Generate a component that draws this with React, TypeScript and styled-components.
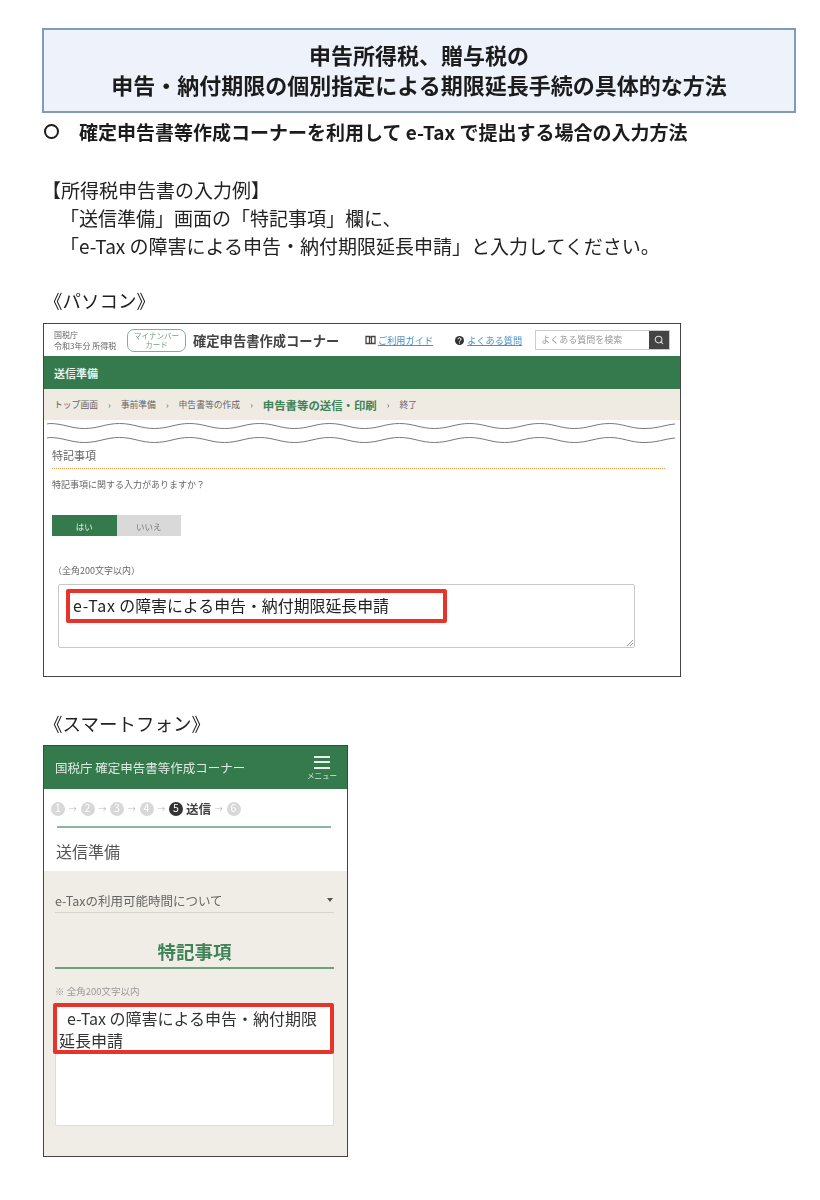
import { Fragment } from "react";
import styled, { createGlobalStyle } from "styled-components";
import { Search } from "lucide-react";

const GlobalStyle = createGlobalStyle`
  html, body {
    margin: 0;
    background: #fff;
  }
  body {
    font-family: "Noto Sans CJK JP", "Noto Sans", sans-serif;
    color: #222;
  }
`;

const Page = styled.div`
  width: 820px;
  height: 1200px;
  box-sizing: border-box;
  padding: 28px 24px 0 42px;
  overflow: hidden;
  filter: blur(0.35px);
`;

const TitleBox = styled.div`
  width: 754px;
  height: 85px;
  box-sizing: border-box;
  border: 2px solid #7f9bb8;
  padding-bottom: 4px;
  background: #eef3fb;
  display: flex;
  flex-direction: column;
  align-items: center;
  justify-content: center;
  font-size: 22px;
  font-weight: 700;
  line-height: 30px;
  color: #1c1c1c;
`;

const Heading = styled.div`
  display: flex;
  align-items: center;
  gap: 20px;
  height: 28px;
  margin-top: 4px;
  padding-left: 2px;
  font-size: 19px;
  font-weight: 700;
  color: #1c1c1c;
`;

const Ring = styled.span`
  width: 11px;
  height: 11px;
  border: 2.5px solid #1c1c1c;
  border-radius: 50%;
`;

const Body = styled.div`
  margin-top: 31px;
  font-size: 19px;
  line-height: 28px;
`;

const Indented = styled.div`
  padding-left: 18px;
`;

const Caption = styled.div<{ $top: number }>`
  margin-top: ${(p) => p.$top}px;
  padding-left: 2px;
  font-size: 18.5px;
  line-height: 28px;
`;

const DesktopFrame = styled.div`
  width: 638px;
  height: 354px;
  margin: 9px 0 0 1px;
  box-sizing: border-box;
  border: 1.5px solid #444;
  display: flex;
  flex-direction: column;
  background: #fff;
`;

const TopBar = styled.div`
  height: 32px;
  flex: none;
  display: flex;
  align-items: center;
  padding: 0 10px;
  color: #555;
`;

const Agency = styled.div`
  width: 73px;
  flex: none;
  font-size: 8px;
  line-height: 11px;
  color: #666;
  white-space: nowrap;
`;

const CardBadge = styled.div`
  width: 59px;
  height: 23px;
  flex: none;
  box-sizing: border-box;
  border: 1px solid #7fae93;
  border-radius: 7px;
  display: flex;
  align-items: center;
  justify-content: center;
  text-align: center;
  font-size: 7.5px;
  line-height: 9px;
  color: #6f9f84;
`;

const AppTitle = styled.div`
  margin-left: 7px;
  width: 172px;
  flex: none;
  font-size: 13.3px;
  font-weight: 700;
  color: #444;
  white-space: nowrap;
`;

const GuideLink = styled.a`
  display: flex;
  align-items: center;
  gap: 2px;
  margin-right: 21px;
  flex: none;
  font-size: 9.2px;
  color: #4a90c8;
  text-decoration: underline;
  white-space: nowrap;
`;

const SearchBox = styled.div`
  margin-left: -8px;
  width: 135px;
  height: 20px;
  flex: none;
  display: flex;
  box-sizing: border-box;
  border: 1px solid #ccc;
`;

const SearchText = styled.div`
  flex: 1;
  padding-left: 5px;
  font-size: 9px;
  line-height: 18px;
  color: #999;
`;

const SearchButton = styled.div`
  width: 20px;
  background: #444;
  color: #ddd;
  display: flex;
  align-items: center;
  justify-content: center;
`;

const GreenBand = styled.div`
  height: 33px;
  flex: none;
  background: #357a4c;
  color: #e8f0ea;
  display: flex;
  align-items: center;
  padding-left: 10px;
  font-size: 11px;
  font-weight: 700;
`;

const Crumbs = styled.div`
  height: 31px;
  flex: none;
  background: #efebe3;
  display: flex;
  align-items: center;
  gap: 10px;
  padding-left: 10px;
  font-size: 8.8px;
  color: #666;
`;

const CrumbNow = styled.span`
  font-size: 11.4px;
  font-weight: 700;
  color: #3f8458;
`;

const WaveCut = styled.svg`
  display: block;
  flex: none;
  width: 100%;
  height: 25px;
`;

const Form = styled.div`
  flex: 1;
  padding: 0 8px 0 8px;
  display: flex;
  flex-direction: column;
`;

const FieldTitle = styled.div`
  height: 20px;
  padding-bottom: 3px;
  border-bottom: 1px dotted #e8a04c;
  margin-right: 7px;
  font-size: 11px;
  line-height: 20px;
  color: #666;
`;

const Question = styled.div`
  margin-top: 9px;
  font-size: 9px;
  line-height: 14px;
  color: #666;
`;

const Toggle = styled.div`
  display: flex;
  margin-top: 23px;
`;

const ToggleButton = styled.div<{ $on?: boolean }>`
  width: 64.5px;
  height: 21px;
  display: flex;
  align-items: center;
  justify-content: center;
  font-size: 8.5px;
  background: ${(p) => (p.$on ? "#357a4c" : "#d9d9d9")};
  color: ${(p) => (p.$on ? "#e8f0ea" : "#777")};
`;

const LimitNote = styled.div`
  margin: 29px 0 0 1px;
  font-size: 9px;
  line-height: 12px;
  color: #666;
`;

const TextArea = styled.div`
  position: relative;
  width: 577px;
  height: 64px;
  margin: 7px 0 0 6px;
  box-sizing: border-box;
  border: 1px solid #c8c8c8;
  border-radius: 2px;
  padding: 4px 0 0 7px;
`;

const Highlight = styled.div`
  width: 381px;
  height: 34px;
  box-sizing: border-box;
  border: 4px solid #e8332a;
  border-radius: 2px;
  padding-left: 3px;
  font-size: 15.9px;
  line-height: 26px;
  color: #222;
  white-space: pre;
`;

const LatinWord = styled.span`
  letter-spacing: 0.8px;
`;

const ResizeGrip = styled.svg`
  position: absolute;
  right: 1px;
  bottom: 1px;
  width: 7px;
  height: 7px;
`;

const PhoneFrame = styled.div`
  width: 305px;
  height: 412px;
  margin: 8px 0 0 1px;
  box-sizing: border-box;
  border: 1.5px solid #444;
  display: flex;
  flex-direction: column;
  background: #f0ede6;
`;

const PhoneHeader = styled.div`
  height: 43px;
  flex: none;
  background: #357a4c;
  color: #dfe9e2;
  display: flex;
  align-items: center;
  justify-content: space-between;
  padding: 0 10px 0 11px;
  font-size: 12.5px;
`;

const MenuButton = styled.div`
  display: flex;
  flex-direction: column;
  align-items: center;
  gap: 2px;
  font-size: 7.5px;
  line-height: 9px;
`;

const MenuBars = styled.div`
  width: 16px;
  height: 13px;
  border-top: 2px solid #e6eee8;
  border-bottom: 2px solid #e6eee8;
  box-sizing: border-box;
  display: flex;
  align-items: center;

  &::before {
    content: "";
    display: block;
    width: 100%;
    height: 2px;
    background: #e6eee8;
  }
`;

const PhoneTop = styled.div`
  height: 82px;
  flex: none;
  background: #fff;
  padding: 0 16px 0 13px;
  color: #555;
`;

const Steps = styled.div`
  height: 37px;
  box-sizing: border-box;
  padding-top: 2px;
  margin-left: -6px;
  display: flex;
  align-items: center;
  gap: 3px;
  font-size: 8px;
  color: #c4c4c4;
`;

const StepDot = styled.span<{ $on?: boolean }>`
  width: 14px;
  height: 14px;
  border-radius: 50%;
  display: flex;
  align-items: center;
  justify-content: center;
  font-size: 10.5px;
  line-height: 1;
  background: ${(p) => (p.$on ? "#333" : "#d8d8d8")};
  color: #fff;
`;

const StepArrow = styled.span`
  width: 9.5px;
  text-align: center;
  font-size: 8px;
  color: #bbb;
`;

const StepLabel = styled.span`
  font-size: 12.5px;
  font-weight: 700;
  color: #444;
`;

const StepRule = styled.div`
  height: 1.5px;
  background: #8db79d;
`;

const PhoneTitle = styled.div`
  font-size: 16px;
  line-height: 46px;
  margin-left: -1px;
`;

const PhoneForm = styled.div`
  flex: 1;
  padding: 17px 13px 0 11px;
  display: flex;
  flex-direction: column;
`;

const Accordion = styled.div`
  height: 24px;
  display: flex;
  align-items: center;
  justify-content: space-between;
  border-bottom: 1px solid #d8d4ca;
  font-size: 12.5px;
  color: #666;
`;

const Caret = styled.span`
  width: 0;
  height: 0;
  margin-right: 1px;
  border-left: 3.5px solid transparent;
  border-right: 3.5px solid transparent;
  border-top: 4px solid #555;
`;

const GreenHeading = styled.div`
  margin-top: 21px;
  height: 33px;
  border-bottom: 2px solid #6aa37e;
  text-align: center;
  font-size: 18.5px;
  font-weight: 700;
  line-height: 34px;
  color: #3f8458;
`;

const PhoneNote = styled.div`
  margin-top: 15px;
  font-size: 9.5px;
  line-height: 14px;
  color: #999;
`;

const PhoneArea = styled.div`
  margin-top: 5px;
  height: 123px;
  box-sizing: border-box;
  border: 1px solid #e0ddd5;
  border-radius: 2px;
  background: #fff;
`;

const PhoneHighlight = styled.div`
  margin: -1px -1px 0 -3px;
  height: 51px;
  box-sizing: border-box;
  border: 4px solid #e8332a;
  border-radius: 2px;
  background: #fff;
  padding-left: 2px;
  font-size: 16px;
  line-height: 22px;
  color: #333;
`;

const FirstLine = styled.div`
  padding-left: 8px;
  white-space: nowrap;
`;

// cut marks across the desktop shot: period 70, crests at x = 120 + 70k on the page
const waveLine = (() => {
  let d = "M3 -2 L 5.5 -2.5";
  for (let x = 5.5; x < 500; x += 70) {
    d += ` C ${x + 14} -2.5, ${x + 21} 2.5, ${x + 35} 2.5 S ${x + 56} -2.5, ${x + 70} -2.5`;
  }
  return d + " C 579 -2.5, 586 2.5, 600 2.5 S 620 -1, 631 -2";
})();

const steps = [1, 2, 3, 4];

const App = () => {
  return (
    <Page>
      <GlobalStyle />
      <TitleBox>
        <div>申告所得税、贈与税の</div>
        <div>申告・納付期限の個別指定による期限延長手続の具体的な方法</div>
      </TitleBox>
      <Heading>
        <Ring />
        <span>確定申告書等作成コーナーを利用して e-Tax で提出する場合の入力方法</span>
      </Heading>
      <Body>
        <div>【所得税申告書の入力例】</div>
        <Indented>「送信準備」画面の「特記事項」欄に、</Indented>
        <Indented>「e-Tax の障害による申告・納付期限延長申請」と入力してください。</Indented>
      </Body>
      <Caption $top={26}>《パソコン》</Caption>
      <DesktopFrame>
        <TopBar>
          <Agency>
            <div>国税庁</div>
            <div>令和3年分 所得税</div>
          </Agency>
          <CardBadge>
            <div>
              マイナンバー
              <br />
              カード
            </div>
          </CardBadge>
          <AppTitle>確定申告書作成コーナー</AppTitle>
          <GuideLink>
            <svg width="11" height="10" viewBox="0 0 11 10">
              <path d="M1 1.5h3.5v7H1zM6.5 1.5H10v7H6.5zM4.5 2h2M1 8.5h9" fill="none" stroke="#444" strokeWidth="1.3" />
            </svg>
            ご利用ガイド
          </GuideLink>
          <GuideLink>
            <svg width="11" height="11" viewBox="0 0 11 11">
              <circle cx="5.5" cy="5.5" r="4.5" fill="#333" />
              <path d="M4 4.3a1.5 1.5 0 1 1 2 1.4c-.4.2-.5.4-.5.9M5.5 7.6v1" fill="none" stroke="#fff" strokeWidth="1" />
            </svg>
            よくある質問
          </GuideLink>
          <SearchBox>
            <SearchText>よくある質問を検索</SearchText>
            <SearchButton>
              <Search size={10} strokeWidth={2.5} />
            </SearchButton>
          </SearchBox>
        </TopBar>
        <GreenBand>送信準備</GreenBand>
        <Crumbs>
          <span>トップ画面</span>
          <span>›</span>
          <span>事前準備</span>
          <span>›</span>
          <span>申告書等の作成</span>
          <span>›</span>
          <CrumbNow>申告書等の送信・印刷</CrumbNow>
          <span>›</span>
          <span>終了</span>
        </Crumbs>
        <WaveCut viewBox="0 0 636 25">
          <path d={waveLine} transform="translate(0 6)" fill="none" stroke="#777" strokeWidth="1" />
          <path d={waveLine} transform="translate(0 20)" fill="none" stroke="#777" strokeWidth="1" />
        </WaveCut>
        <Form>
          <FieldTitle>特記事項</FieldTitle>
          <Question>特記事項に関する入力がありますか？</Question>
          <Toggle>
            <ToggleButton $on>はい</ToggleButton>
            <ToggleButton>いいえ</ToggleButton>
          </Toggle>
          <LimitNote>（全角200文字以内）</LimitNote>
          <TextArea>
            <Highlight>
              <LatinWord>e-Tax</LatinWord> の障害による申告・納付期限延長申請
            </Highlight>
            <ResizeGrip viewBox="0 0 7 7">
              <path d="M1 7L7 1M4 7l3-3" stroke="#999" strokeWidth="1" />
            </ResizeGrip>
          </TextArea>
        </Form>
      </DesktopFrame>
      <Caption $top={32}>《スマートフォン》</Caption>
      <PhoneFrame>
        <PhoneHeader>
          <span>国税庁 確定申告書等作成コーナー</span>
          <MenuButton>
            <MenuBars />
            <span>メニュー</span>
          </MenuButton>
        </PhoneHeader>
        <PhoneTop>
          <Steps>
            {steps.map((n) => (
              <Fragment key={n}>
                <StepDot>{n}</StepDot>
                <StepArrow>→</StepArrow>
              </Fragment>
            ))}
            <StepDot $on>5</StepDot>
            <StepLabel>送信</StepLabel>
            <StepArrow>→</StepArrow>
            <StepDot>6</StepDot>
          </Steps>
          <StepRule />
          <PhoneTitle>送信準備</PhoneTitle>
        </PhoneTop>
        <PhoneForm>
          <Accordion>
            <span>e-Taxの利用可能時間について</span>
            <Caret />
          </Accordion>
          <GreenHeading>特記事項</GreenHeading>
          <PhoneNote>※ 全角200文字以内</PhoneNote>
          <PhoneArea>
            <PhoneHighlight>
              <FirstLine>e-Tax の障害による申告・納付期限</FirstLine>
              <div>延長申請</div>
            </PhoneHighlight>
          </PhoneArea>
        </PhoneForm>
      </PhoneFrame>
    </Page>
  );
};

export default App;
